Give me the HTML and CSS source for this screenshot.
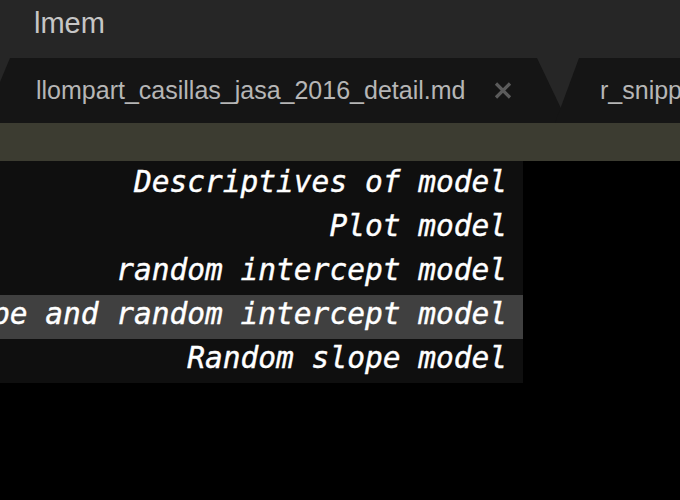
FILE: index.html
```html
<!DOCTYPE html>
<html>
<head>
<meta charset="utf-8">
<link rel="stylesheet" href="styles.css">
</head>
<body>
<div class="titlebar">lmem</div>
<div class="tabbar">
  <div class="tab tab-active">
    <span class="tab-label">llompart_casillas_jasa_2016_detail.md</span>
    <svg class="tab-close" width="18" height="17" viewBox="0 0 18 17"><path d="M2 1.5 L16 15.5 M16 1.5 L2 15.5" stroke="#5b5b5b" stroke-width="3.2" stroke-linecap="butt"/></svg>
  </div>
  <div class="tab tab-next">
    <span class="tab-label">r_snippets.R</span>
  </div>
</div>
<div class="infobar"></div>
<div class="editor">
  <ul class="popup">
    <li class="item">Descriptives of model</li>
    <li class="item">Plot model</li>
    <li class="item">random intercept model</li>
    <li class="item item-selected">Random slope and random intercept model</li>
    <li class="item">Random slope model</li>
  </ul>
</div>
</body>
</html>
```
FILE: styles.css
```css
html, body {
  margin: 0;
  padding: 0;
  background: #000;
  overflow: hidden;
}
body {
  width: 680px;
  height: 500px;
  font-family: "Liberation Sans", Arial, sans-serif;
}
.titlebar {
  height: 58px;
  box-sizing: border-box;
  padding: 6px 0 0 34px;
  background: #262626;
  color: #c6c6c6;
  font-size: 29px;
  line-height: 34px;
}
.tabbar {
  height: 65px;
  background: #262626;
  display: flex;
  overflow: hidden;
}
.tab {
  height: 65px;
  background: #151515;
  display: flex;
  align-items: center;
  flex-shrink: 0;
  box-sizing: border-box;
  padding-bottom: 1px;
}
.tab-active {
  margin-left: -17px;
  width: 585px;
  padding-left: 53px;
  clip-path: polygon(27px 0, calc(100% - 31px) 0, 100% 100%, 0 100%);
}
.tab-next {
  margin-left: -13px;
  width: 300px;
  padding-left: 45px;
  clip-path: polygon(24px 0, 100% 0, 100% 100%, 0 100%);
}
.tab-label {
  color: #b6b6b6;
  font-size: 25px;
  white-space: nowrap;
}
.tab-close {
  margin-left: 29px;
  margin-top: 1px;
}
.infobar {
  height: 38px;
  background: #3c3c31;
}
.editor {
  height: 339px;
}
.popup {
  list-style: none;
  margin: 0;
  padding: 2px 0 0 0;
  width: 523px;
  background: #0f0f0f;
  overflow: hidden;
}
.item {
  height: 44px;
  box-sizing: border-box;
  padding: 1px 16px 6px 0;
  display: flex;
  justify-content: flex-end;
  white-space: nowrap;
  font-family: "DejaVu Sans Mono", monospace;
  font-style: italic;
  font-size: 29.5px;
  line-height: 37px;
  color: #ffffff;
  -webkit-text-stroke: 0.4px #ffffff;
}
.item-selected {
  background: #404040;
}
```
